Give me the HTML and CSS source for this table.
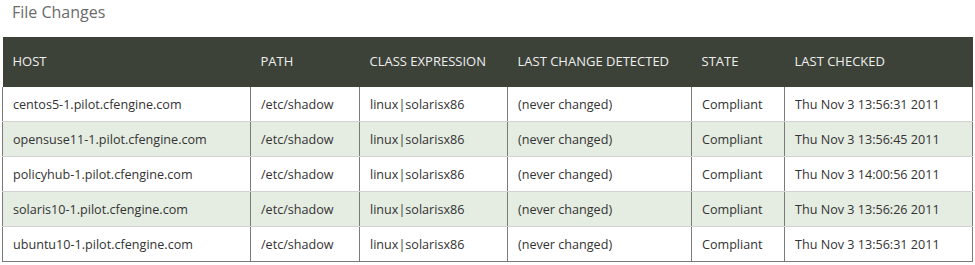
FILE: index.html
```html
<!DOCTYPE html>
<html>
<head>
<meta charset="utf-8">
<link rel="stylesheet" href="styles.css">
</head>
<body>
<div class="page">
  <h2 class="title">File Changes</h2>
  <table class="changes">
    <colgroup>
      <col class="c-host"><col class="c-path"><col class="c-class"><col class="c-change"><col class="c-state"><col class="c-checked">
    </colgroup>
    <thead>
      <tr><th>HOST</th><th>PATH</th><th>CLASS EXPRESSION</th><th>LAST CHANGE DETECTED</th><th>STATE</th><th>LAST CHECKED</th></tr>
    </thead>
    <tbody>
      <tr><td>centos5-1.pilot.cfengine.com</td><td>/etc/shadow</td><td>linux|solarisx86</td><td>(never changed)</td><td>Compliant</td><td>Thu Nov 3 13:56:31 2011</td></tr>
      <tr><td>opensuse11-1.pilot.cfengine.com</td><td>/etc/shadow</td><td>linux|solarisx86</td><td>(never changed)</td><td>Compliant</td><td>Thu Nov 3 13:56:45 2011</td></tr>
      <tr><td>policyhub-1.pilot.cfengine.com</td><td>/etc/shadow</td><td>linux|solarisx86</td><td>(never changed)</td><td>Compliant</td><td>Thu Nov 3 14:00:56 2011</td></tr>
      <tr><td>solaris10-1.pilot.cfengine.com</td><td>/etc/shadow</td><td>linux|solarisx86</td><td>(never changed)</td><td>Compliant</td><td>Thu Nov 3 13:56:26 2011</td></tr>
      <tr><td>ubuntu10-1.pilot.cfengine.com</td><td>/etc/shadow</td><td>linux|solarisx86</td><td>(never changed)</td><td>Compliant</td><td>Thu Nov 3 13:56:31 2011</td></tr>
    </tbody>
  </table>
</div>
</body>
</html>
```

FILE: styles.css
```css
html, body {
  margin: 0;
  padding: 0;
  background: #ffffff;
}

.page {
  padding: 0 0 0 2px;
  font-family: "Open Sans", "Liberation Sans", sans-serif;
}

.title {
  margin: 0;
  padding: 0 0 0 10px;
  height: 37px;
  line-height: 24px;
  font-size: 16px;
  font-weight: normal;
  color: #6b6b6b;
}

.changes {
  border-collapse: collapse;
  table-layout: fixed;
  width: 970px;
  font-size: 12.6px;
  color: #333333;
}

.c-host { width: 248px; }
.c-path { width: 109px; }
.c-class { width: 148px; }
.c-change { width: 184px; }
.c-state { width: 93px; }
.c-checked { width: 188px; }

.changes th {
  background: #3d4239;
  color: #eeeeee;
  font-weight: normal;
  text-align: left;
  height: 48px;
  padding: 0 10px 2px;
  font-size: 13px;
  border: 0;
}

.changes td {
  height: 34px;
  padding: 0 10px;
  border-left: 1px solid #7a7a7a;
  border-right: 1px solid #7a7a7a;
  border-bottom: 1px solid #d2d2d2;
  white-space: nowrap;
}

.changes tbody tr:nth-child(even) td {
  background: #e5ece2;
}

.changes tbody tr:last-child td {
  border-bottom: 1px solid #7a7a7a;
}
```
